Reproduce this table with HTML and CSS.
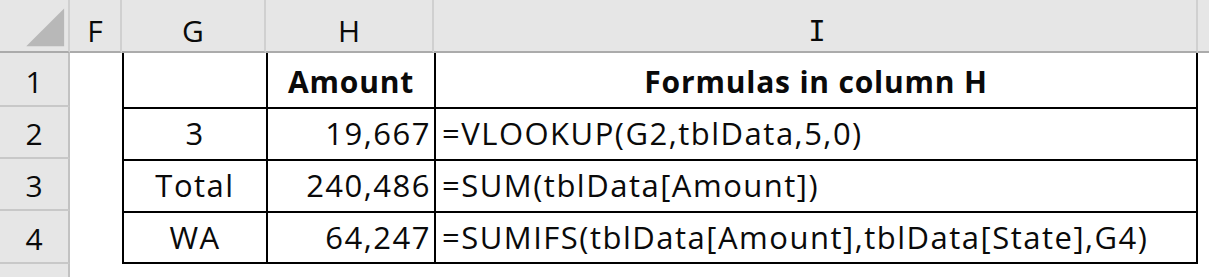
FILE: index.html
```html
<!DOCTYPE html>
<html>
<head>
<meta charset="utf-8">
<link rel="stylesheet" href="styles.css">
</head>
<body>
<div class="sheet">
  <div class="ch corner"><svg class="tri" width="70" height="53" viewBox="0 0 70 53"><polygon points="27,49 66,49 66,10" fill="#b8b8b8"/></svg></div>
  <div class="ch">F</div>
  <div class="ch">G</div>
  <div class="ch">H</div>
  <div class="ch"><span class="serif-i">I</span></div>
  <div class="ch edge"></div>

  <div class="rh">1</div>
  <div class="blank"></div>
  <div class="t r1 c"></div>
  <div class="t r1 c bold">Amount</div>
  <div class="t r1 lastc c bold">Formulas in column H</div>
  <div class="blank"></div>

  <div class="rh">2</div>
  <div class="blank"></div>
  <div class="t c">3</div>
  <div class="t num">19,667</div>
  <div class="t lastc txt">=VLOOKUP(G2,tblData,5,0)</div>
  <div class="blank"></div>

  <div class="rh">3</div>
  <div class="blank"></div>
  <div class="t c">Total</div>
  <div class="t num">240,486</div>
  <div class="t lastc txt">=SUM(tblData[Amount])</div>
  <div class="blank"></div>

  <div class="rh">4</div>
  <div class="blank"></div>
  <div class="t lastr c">WA</div>
  <div class="t lastr num">64,247</div>
  <div class="t lastr lastc txt">=SUMIFS(tblData[Amount],tblData[State],G4)</div>
  <div class="blank"></div>

  <div class="rh tail"></div>
  <div class="blank"></div>
  <div class="blank"></div>
  <div class="blank"></div>
  <div class="blank"></div>
  <div class="blank"></div>
</div>
</body>
</html>
```

FILE: styles.css
```css
html, body {
  margin: 0;
  padding: 0;
  background: #ffffff;
}

.sheet {
  display: grid;
  grid-template-columns: 70px 52px 144px 168px 764px 11px;
  grid-template-rows: 53px 54px 52px 52px 53px 13px;
  width: 1209px;
  height: 277px;
  overflow: hidden;
  font-family: "Open Sans", Lato, sans-serif;
  font-size: 30px;
  color: #0a0a0a;
}

.sheet > div {
  box-sizing: border-box;
  display: flex;
  align-items: flex-end;
  line-height: 1;
  white-space: nowrap;
}

.ch {
  background: #e6e6e6;
  border-right: 2px solid #d0d0d0;
  border-bottom: 2px solid #ababab;
  justify-content: center;
  padding-bottom: 5px;
}

.ch.corner {
  padding: 0;
}

.ch.edge {
  border-right: none;
}

.serif-i {
  font-family: "DejaVu Sans Mono", "Liberation Mono", monospace;
  font-size: 29px;
  padding-left: 4px;
}

.tri {
  display: block;
}

.rh {
  background: #e6e6e6;
  border-right: 2px solid #c2c2c2;
  border-bottom: 2px solid #c8c8c8;
  justify-content: center;
  padding-bottom: 8px;
}

.rh.tail {
  border-bottom: none;
}

.blank {
  background: #ffffff;
}

.t {
  background: #ffffff;
  border-top: 2px solid #000000;
  border-left: 2px solid #000000;
  padding-bottom: 10px;
  font-size: 31px;
  letter-spacing: 1.5px;
}

.t.r1 {
  border-top: none;
}

.t.lastc {
  border-right: 2px solid #000000;
}

.t.lastr {
  border-bottom: 2px solid #000000;
  padding-bottom: 9px;
}

.c {
  justify-content: center;
}

.num {
  justify-content: flex-end;
  padding-right: 3px;
}

.txt {
  justify-content: flex-start;
  padding-left: 6px;
}

.t.bold {
  font-weight: 700;
  font-size: 30px;
  letter-spacing: 0.8px;
}
```
